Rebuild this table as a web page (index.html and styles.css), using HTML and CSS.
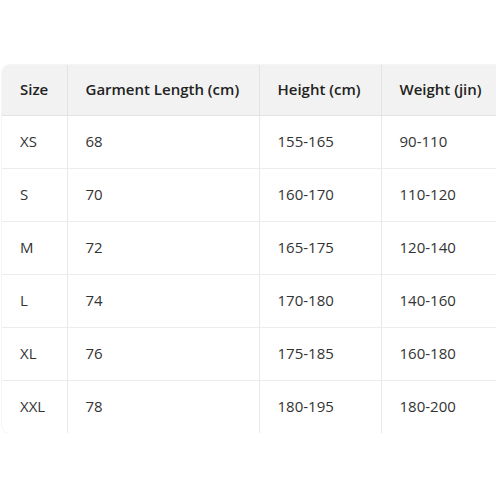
FILE: index.html
```html
<!DOCTYPE html>
<html>
<head>
<meta charset="utf-8">
<link rel="stylesheet" href="styles.css">
</head>
<body>
<div class="page">
  <div class="card">
    <table class="sizes">
      <colgroup>
        <col class="c1"><col class="c2"><col class="c3"><col class="c4">
      </colgroup>
      <thead>
        <tr><th>Size</th><th>Garment Length (cm)</th><th>Height (cm)</th><th>Weight (jin)</th></tr>
      </thead>
      <tbody>
        <tr><td>XS</td><td>68</td><td>155-165</td><td>90-110</td></tr>
        <tr><td>S</td><td>70</td><td>160-170</td><td>110-120</td></tr>
        <tr><td>M</td><td>72</td><td>165-175</td><td>120-140</td></tr>
        <tr><td>L</td><td>74</td><td>170-180</td><td>140-160</td></tr>
        <tr><td>XL</td><td>76</td><td>175-185</td><td>160-180</td></tr>
        <tr><td>XXL</td><td>78</td><td>180-195</td><td>180-200</td></tr>
      </tbody>
    </table>
  </div>
</div>
</body>
</html>
```
FILE: styles.css
```css
html, body {
  margin: 0;
  padding: 0;
  background: #fff;
  overflow: hidden;
}
.page {
  padding: 65px 0 0 2px;
  width: 494px;
  overflow: hidden;
}
.card {
  width: 512px;
  border-radius: 8px;
  overflow: hidden;
  box-shadow: 0 0 0 1px #f5f5f5;
}
.sizes {
  border-collapse: collapse;
  table-layout: fixed;
  width: 512px;
  font-family: "Open Sans", "Noto Sans", sans-serif;
  font-size: 15px;
  color: #333;
}
.c1 { width: 65px; }
.c2 { width: 192px; }
.c3 { width: 122px; }
.c4 { width: 133px; }
.sizes th {
  background: #f2f2f2;
  font-weight: 600;
  color: #222;
  text-align: left;
  height: 50px;
  padding: 0 0 2px 18px;
  border-bottom: 1px solid #e3e3e3;
  border-left: 1px solid #e3e3e3;
  box-sizing: border-box;
  white-space: nowrap;
}
.sizes td {
  height: 53px;
  padding: 0 0 2px 18px;
  border-bottom: 1px solid #ececec;
  border-left: 1px solid #e8e8e8;
  box-sizing: border-box;
}
.sizes th:first-child, .sizes td:first-child { border-left: none; }
.sizes tbody tr:last-child td { border-bottom: none; }
```
